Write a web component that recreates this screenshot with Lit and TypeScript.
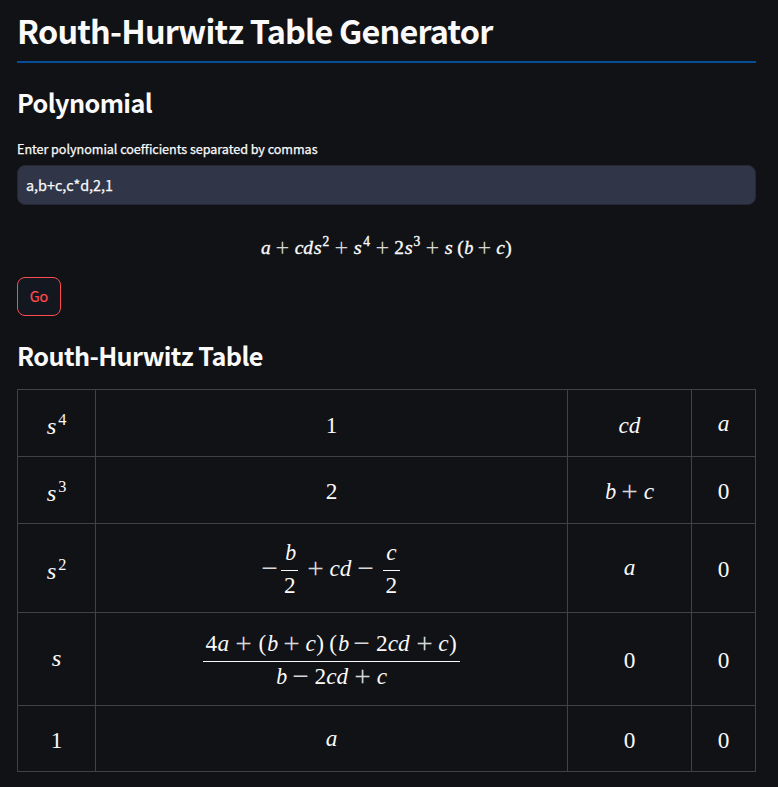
import { LitElement, html, css, TemplateResult } from "lit";
import { customElement, property } from "lit/decorators.js";

const LETTERS = "abcds";

type Cell = { tex: string; shift?: "flat" | "power" };

/**
 * Typesets a small math language: letters, digits, + - ( ),
 * ^n for a power, ~ for a thin space and {num|den} for a fraction.
 */
@customElement("math-expr")
export class MathExpr extends LitElement {
  @property() tex = "";

  static styles = css`
    :host {
      display: inline-flex;
      align-items: center;
      font-family: "Liberation Serif", serif;
      line-height: 24px;
      white-space: nowrap;
    }
    .tok {
      display: inline-block;
      text-align: center;
      font-style: normal;
      height: 24px;
    }
    .tok > span {
      display: inline-block;
    }
    .a, .b, .c, .d, .s {
      font-style: italic;
    }
    .a { width: 0.529em; }
    .b { width: 0.429em; }
    .c { width: 0.433em; }
    .d { width: 0.52em; }
    .s { width: 0.469em; }
    .s > span { transform: scale(1.06, 0.96); transform-origin: 50% 80%; }
    .b > span { transform: scaleX(0.94); }
    .digit { width: 0.5em; }
    .paren { width: 0.389em; }
    .thin { width: 0.167em; }
    .op {
      width: 0.778em;
      margin: 0 0.222em;
    }
    .op.unary { margin: 0; }
    .op > span {
      transform: translateY(0.05em) scale(1.26);
      transform-origin: 50% 63%;
      opacity: 0.85;
      -webkit-text-stroke: 0;
    }
    .sup {
      display: inline-block;
      height: 24px;
      font-size: 0.7em;
      padding-left: var(--sup-gap, 0.03em);
      width: 0.55em;
      transform: translateY(var(--sup-rise, -0.42em));
    }
    .frac {
      display: inline-flex;
      flex-direction: column;
      align-items: center;
      margin: 0 0.12em;
    }
    .row { display: flex; height: 24px; padding: 0 0.11em; }
    .bar {
      align-self: stretch;
      height: 1px;
      margin: 6px 0 2px;
      background: currentColor;
    }
  `;

  private typeset(src: string): TemplateResult[] {
    const out: TemplateResult[] = [];
    for (let i = 0; i < src.length; i++) {
      const ch = src[i];
      if (ch === "{") {
        const end = src.indexOf("}", i);
        const [num, den] = src.slice(i + 1, end).split("|");
        out.push(html`<span class="frac"><span class="row">${this.typeset(num)}</span><span class="bar"></span><span class="row">${this.typeset(den)}</span></span>`);
        i = end;
      } else if (ch === "^") {
        out.push(html`<span class="sup">${src[++i]}</span>`);
      } else if (ch === "~") {
        out.push(html`<span class="tok thin"></span>`);
      } else if (ch === "+" || ch === "-") {
        const unary = i === 0 ? "unary" : "";
        out.push(html`<span class="tok op ${unary}"><span>${ch === "-" ? "\u2212" : ch}</span></span>`);
      } else {
        const kind = LETTERS.includes(ch) ? ch : "()".includes(ch) ? "paren" : "digit";
        out.push(html`<span class="tok ${kind}"><span>${ch}</span></span>`);
      }
    }
    return out;
  }

  render() {
    return html`${this.typeset(this.tex)}`;
  }
}

@customElement("app-root")
export class AppRoot extends LitElement {
  private rows: Cell[][] = [
    [{ tex: "s^4", shift: "power" }, { tex: "1" }, { tex: "cd" }, { tex: "a", shift: "flat" }],
    [{ tex: "s^3", shift: "power" }, { tex: "2" }, { tex: "b+c" }, { tex: "0" }],
    [{ tex: "s^2", shift: "power" }, { tex: "-{b|2}+cd-{c|2}" }, { tex: "a", shift: "flat" }, { tex: "0" }],
    [{ tex: "s", shift: "flat" }, { tex: "{4a+(b+c)~(b-2cd+c)|b-2cd+c}" }, { tex: "0" }, { tex: "0" }],
    [{ tex: "1" }, { tex: "a", shift: "flat" }, { tex: "0" }, { tex: "0" }],
  ];

  static styles = css`
    :host {
      display: block;
      box-sizing: border-box;
      height: 787px;
      padding: 0 22px 0 17px;
      background: #111216;
      color: #fafafa;
      font-family: "Noto Sans CJK SC", sans-serif;
      overflow: hidden;
    }
    h1, h2 { margin: 0; font-weight: 700; white-space: nowrap; }
    h1 {
      font-size: 32.4px;
      line-height: 60px;
      height: 61px;
      letter-spacing: -0.8px;
      border-bottom: 2px solid #054c99;
    }
    h2 {
      margin-top: 19px;
      font-size: 25.2px;
      line-height: 40px;
      letter-spacing: -0.6px;
    }
    label {
      display: block;
      margin-top: 17px;
      font-size: 12.6px;
      line-height: 20px;
      letter-spacing: -0.04px;
      -webkit-text-stroke: 0.25px currentColor;
    }
    input {
      display: block;
      box-sizing: border-box;
      width: 100%;
      height: 40px;
      margin: 6px 0 0;
      padding: 0 8px 2px;
      border: 1px solid #262935;
      border-radius: 8px;
      background: #303548;
      color: #fafafa;
      font: 14.4px/36px "Noto Sans CJK SC", sans-serif;
      -webkit-text-stroke: 0.25px currentColor;
      outline: none;
    }
    .formula {
      display: flex;
      justify-content: center;
      align-items: center;
      height: 32px;
      margin-top: 27px;
      font-size: 19.36px;
      -webkit-text-stroke: 0.35px currentColor;
    }
    button {
      display: block;
      box-sizing: border-box;
      width: 44px;
      height: 39px;
      margin-top: 13px;
      padding: 0 0 2px;
      border: 1px solid #ff4b4b;
      border-radius: 8px;
      background: #131720;
      color: #ff4b4b;
      font: 14.4px/35px "Noto Sans CJK SC", sans-serif;
      -webkit-text-stroke: 0.2px currentColor;
    }
    .table {
      display: grid;
      grid-template-columns: 78px 472px 124px 64px;
      grid-template-rows: 67px 67px 89px 93px 66px;
      width: 738px;
      margin-top: 14px;
      border: solid #414245;
      border-width: 1px 0 0 1px;
      font-size: 23.3px;
      --sup-gap: 0.1em;
      --sup-rise: -0.36em;
    }
    .cell {
      display: flex;
      align-items: center;
      justify-content: center;
      border: solid #414245;
      border-width: 0 1px 1px 0;
    }
    .cell math-expr { transform: translateY(1px); }
    .cell.tall math-expr { transform: none; }
    .cell.first math-expr { transform: translateY(2px); }
    .cell.flat math-expr { transform: translateY(-1px); }
    .cell.flat.first math-expr { transform: none; }
    .cell.power math-expr { transform: translateY(3px); }
  `;

  render() {
    return html`
      <h1>Routh-Hurwitz Table Generator</h1>
      <h2>Polynomial</h2>
      <label for="coeffs">Enter polynomial coefficients separated by commas</label>
      <input id="coeffs" type="text" value="a,b+c,c*d,2,1" />
      <div class="formula"><math-expr tex="a+cds^2+s^4+2s^3+s~(b+c)"></math-expr></div>
      <button>Go</button>
      <h2>Routh-Hurwitz Table</h2>
      <div class="table">
        ${this.rows.map((row, r) =>
          row.map(
            (cell) => html`<div class="cell ${cell.shift ?? ""} ${r === 0 ? "first" : ""} ${cell.tex.includes("{") ? "tall" : ""}">
              <math-expr .tex=${cell.tex}></math-expr>
            </div>`
          )
        )}
      </div>
    `;
  }
}
